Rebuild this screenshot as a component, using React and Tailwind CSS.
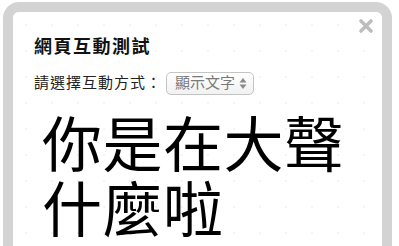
import React from 'react';

const cjk = { fontFamily: '"Liberation Sans", "Noto Sans CJK TC", sans-serif' };

const App = () => {
  return (
    <div
      className="w-[399px] h-[246px] overflow-hidden bg-white pt-[2px] pl-[3px] bg-[radial-gradient(circle,#ededed_1px,transparent_1.5px)] bg-[length:26px_26px]"
      style={cjk}
    >
      <div className="w-[389px] h-[300px] border-[10px] border-[#d3d3d3] rounded-t-[16px] bg-white">
        <div className="relative h-full rounded-t-[6px] bg-white pl-[21px] pt-[23px] bg-[radial-gradient(circle,#f4f4f4_1px,transparent_1.5px)] bg-[length:26px_26px]">
          <button className="absolute right-[8px] top-[6px] text-[#bdbdbd]">
            <svg width="16" height="16" viewBox="0 0 16 16">
              <path d="M3 3 L13 13 M13 3 L3 13" stroke="currentColor" strokeWidth="3.6" strokeLinecap="round" />
            </svg>
          </button>

          <h1 className="text-[18px] leading-[24px] tracking-[1.5px] font-bold text-[#111]">網頁互動測試</h1>

          <div className="mt-[13px] flex items-center">
            <span className="text-[15px] tracking-[1px] text-[#222]">請選擇互動方式：</span>
            <div className="ml-[4px] flex h-[23px] w-[88px] items-center rounded-[5px] border border-[#c4c4c4] bg-gradient-to-b from-white to-[#f1f1f1] pl-[8px] pr-[4px]">
              <span className="text-[15px] text-[#7a7a7a]">顯示文字</span>
              <svg className="ml-[4px]" width="8" height="13" viewBox="0 0 8 13">
                <path d="M4 1 L7.5 5.5 L0.5 5.5 Z M4 12 L7.5 7.5 L0.5 7.5 Z" fill="#8a8a8a" />
              </svg>
            </div>
          </div>

          <p className="mt-[19px] pl-[8px] text-[60px] leading-[65px] tracking-[0.5px] text-black">
            你是在大聲
            <br />
            什麼啦
          </p>
        </div>
      </div>
    </div>
  );
};

export default App;
